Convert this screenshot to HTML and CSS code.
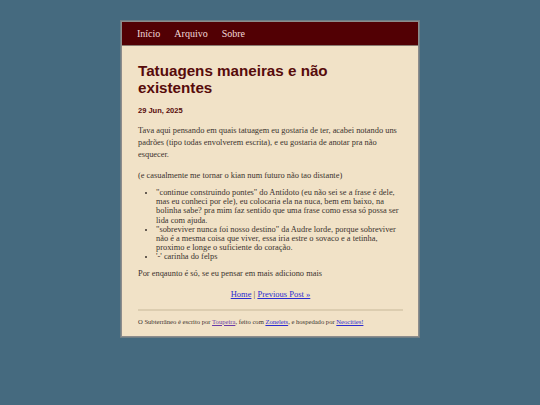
FILE: index.html
```html
<!DOCTYPE html>
<html lang="pt">
<head>
<meta charset="utf-8">
<title>Tatuagens maneiras e não existentes</title>
<link rel="stylesheet" href="styles.css">
</head>
<body>
<div class="page">
  <nav class="topnav">
    <a href="#">Início</a>
    <a href="#">Arquivo</a>
    <a href="#">Sobre</a>
  </nav>
  <main class="content">
    <h1 class="title">Tatuagens maneiras e não existentes</h1>
    <p class="date">29 Jun, 2025</p>
    <p class="text">Tava aqui pensando em quais tatuagem eu gostaria de ter, acabei notando uns padrões (tipo todas envolverem escrita), e eu gostaria de anotar pra não esquecer.</p>
    <p class="text">(e casualmente me tornar o kian num futuro não tao distante)</p>
    <ul class="list">
      <li>"continue construindo pontes" do Antídoto (eu não sei se a frase é dele, mas eu conheci por ele), eu colocaria ela na nuca, bem em baixo, na bolinha sabe? pra mim faz sentido que uma frase como essa só possa ser lida com ajuda.</li>
      <li>"sobreviver nunca foi nosso destino" da Audre lorde, porque sobreviver não é a mesma coisa que viver, essa iria estre o sovaco e a tetinha, proximo e longe o suficiente do coração.</li>
      <li>'-' carinha do felps</li>
    </ul>
    <p class="text">Por enqaunto é só, se eu pensar em mais adiciono mais</p>
    <p class="postnav"><a href="#">Home</a> | <a href="#">Previous Post »</a></p>
    <hr class="rule">
    <footer class="footer">O Subterrâneo é escrito por <a class="visited" href="#">Toupeira</a>, feito com <a href="#">Zonelets</a>, e hospedado por <a href="#">Neocities!</a></footer>
  </main>
</div>
</body>
</html>
```
FILE: styles.css
```css
html, body {
  margin: 0;
  padding: 0;
}
body {
  background: #456a7f;
  font-family: "Liberation Serif", "Times New Roman", serif;
  padding-top: 21px;
  height: 405px;
  box-sizing: border-box;
}
.page {
  width: 298px;
  margin: 0 auto;
  border: 1px solid #8c8c8c;
  box-shadow: 0 0 0 1px #6f7f86;
  box-sizing: border-box;
  background: #f1e2c7;
}
.topnav {
  background: #520004;
  height: 23px;
  display: flex;
  align-items: center;
  gap: 14px;
  padding-left: 15px;
  border-bottom: 1px solid #8a7a70;
}
.topnav a {
  color: #f3d9d9;
  text-decoration: none;
  font-size: 10px;
}
.content {
  padding: 16px 15px 10px 16px;
  color: #3a322e;
  font-size: 8.4px;
}
.title {
  margin: 0;
  font-family: "Liberation Sans", Arial, sans-serif;
  font-size: 15.2px;
  line-height: 17px;
  font-weight: bold;
  color: #570b0b;
}
.date {
  margin: 10px 0 0 0;
  font-family: "Liberation Sans", Arial, sans-serif;
  font-weight: bold;
  font-size: 7.5px;
  line-height: 10px;
  color: #570b0b;
}
.text {
  margin: 9px 0 0 0;
  line-height: 12px;
}
.list {
  margin: 6px 0 0 0;
  padding-left: 18px;
  line-height: 9.2px;
}
.list + .text {
  margin-top: 6px;
}
.postnav {
  margin: 9px 0 0 0;
  text-align: center;
  font-size: 8.5px;
  line-height: 11px;
}
.postnav a {
  color: #2b2bd0;
}
.rule {
  margin: 9px 0 0 0;
  border: 0;
  border-top: 2px solid #dccdb0;
  height: 0;
}
.footer {
  margin-top: 7px;
  font-size: 6.6px;
  line-height: 8px;
}
.footer a {
  color: #2b2bd0;
}
.footer a.visited {
  color: #6a3aa8;
}
```
